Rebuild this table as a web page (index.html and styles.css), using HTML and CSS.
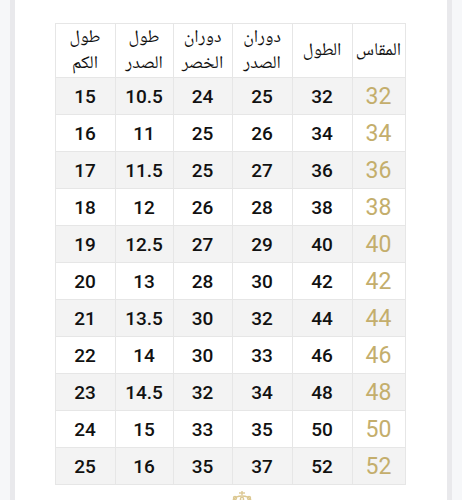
FILE: index.html
```html
<!DOCTYPE html>
<html lang="ar" dir="rtl">
<head>
<meta charset="utf-8">
<link rel="stylesheet" href="styles.css">
</head>
<body>
<div class="page">
  <div class="panel">
    <table class="sizes">
      <colgroup>
        <col class="c-size"><col class="c-len"><col class="c-chest"><col class="c-waist"><col class="c-blen"><col class="c-sleeve">
      </colgroup>
      <thead>
        <tr>
          <th>المقاس</th>
          <th>الطول</th>
          <th>دوران<br>الصدر</th>
          <th>دوران<br>الخصر</th>
          <th>طول<br>الصدر</th>
          <th>طول<br>الكم</th>
        </tr>
      </thead>
      <tbody>
        <tr><td class="gold">32</td><td>32</td><td>25</td><td>24</td><td>10.5</td><td>15</td></tr>
        <tr><td class="gold">34</td><td>34</td><td>26</td><td>25</td><td>11</td><td>16</td></tr>
        <tr><td class="gold">36</td><td>36</td><td>27</td><td>25</td><td>11.5</td><td>17</td></tr>
        <tr><td class="gold">38</td><td>38</td><td>28</td><td>26</td><td>12</td><td>18</td></tr>
        <tr><td class="gold">40</td><td>40</td><td>29</td><td>27</td><td>12.5</td><td>19</td></tr>
        <tr><td class="gold">42</td><td>42</td><td>30</td><td>28</td><td>13</td><td>20</td></tr>
        <tr><td class="gold">44</td><td>44</td><td>32</td><td>30</td><td>13.5</td><td>21</td></tr>
        <tr><td class="gold">46</td><td>46</td><td>33</td><td>30</td><td>14</td><td>22</td></tr>
        <tr><td class="gold">48</td><td>48</td><td>34</td><td>32</td><td>14.5</td><td>23</td></tr>
        <tr><td class="gold">50</td><td>50</td><td>35</td><td>33</td><td>15</td><td>24</td></tr>
        <tr><td class="gold">52</td><td>52</td><td>37</td><td>35</td><td>16</td><td>25</td></tr>
      </tbody>
    </table>
    <div class="logo">
      <svg width="36" height="14" viewBox="0 0 36 14" aria-hidden="true">
        <g fill="none" stroke="#dcc892" stroke-width="1.4">
          <path d="M18 2 V6"/>
          <path d="M15 4 H21"/>
          <path d="M8 14 C9 9 13 7 18 7 C23 7 27 9 28 14"/>
          <circle cx="11" cy="9" r="1.5"/>
          <circle cx="25" cy="9" r="1.5"/>
          <circle cx="18" cy="10" r="1.6"/>
        </g>
      </svg>
    </div>
  </div>
</div>
</body>
</html>
```
FILE: styles.css
```css
html, body {
  margin: 0;
  padding: 0;
  background: #f6f7f9;
}
.page {
  width: 462px;
  height: 500px;
  padding: 0 10px;
  box-sizing: border-box;
  overflow: hidden;
}
.panel {
  height: 500px;
  background: #ffffff;
  border-left: 5px solid #e9e9ec;
  border-right: 5px solid #e9e9ec;
  box-sizing: border-box;
  padding: 23px 42px 0 40px;
  display: flex;
  flex-direction: column;
  align-items: center;
}
.sizes {
  border-collapse: collapse;
  table-layout: fixed;
  width: 350px;
  font-family: "Roboto", "Liberation Sans", "DejaVu Sans", sans-serif;
}
.c-size { width: 53px; }
.c-len { width: 60px; }
.c-chest { width: 60px; }
.c-waist { width: 59px; }
.c-blen { width: 58px; }
.c-sleeve { width: 60px; }
.sizes th, .sizes td {
  border: 1px solid #e6e6e6;
  text-align: center;
  padding: 0;
}
.sizes th {
  height: 53px;
  font-family: "Noto Naskh Arabic", "Noto Sans Arabic", "DejaVu Sans", sans-serif;
  font-weight: normal;
  font-size: 18px;
  line-height: 26px;
  color: #111;
}
.sizes td {
  height: 36px;
  font-size: 19px;
  font-weight: 500;
  color: #111;
}
.sizes tbody tr:nth-child(odd) td {
  background: #f3f3f3;
}
.sizes td.gold {
  color: #c4ae6c;
  font-size: 23px;
  font-weight: 400;
}
.logo {
  margin-top: 4px;
  margin-left: 24px;
  line-height: 0;
}
```
